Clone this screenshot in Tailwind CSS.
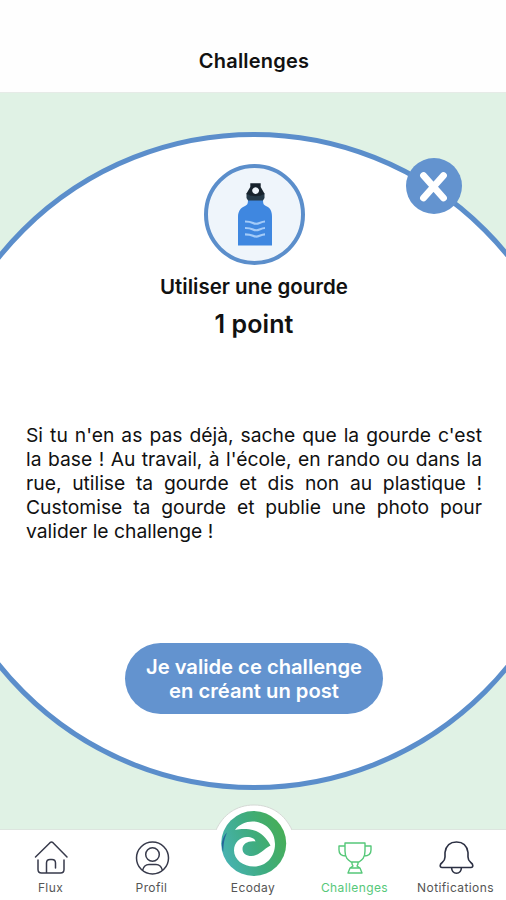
<!DOCTYPE html>
<html lang="fr">
<head>
<meta charset="utf-8">
<title>Challenges</title>
<script src="https://cdn.jsdelivr.net/npm/@tailwindcss/browser@4"></script>
</head>
<body class="w-[506px] h-[900px] overflow-hidden bg-white font-['Inter','Liberation_Sans',sans-serif] text-[#111]">
<div class="flex h-full flex-col">
  <header class="flex h-[93px] shrink-0 items-end justify-center border-b border-[#e6ebe7] bg-[#fefefe] pb-[19px] pl-[2px]">
    <h1 class="text-[20px] leading-6 font-semibold tracking-[.2px]">Challenges</h1>
  </header>

  <main class="flex h-[736px] shrink-0 justify-center overflow-hidden bg-[#e0f2e5] pt-[39px]">
    <section class="relative left-[1px] flex h-[658px] w-[658px] shrink-0 flex-col items-center rounded-full border-[5px] border-[#5b8ecb] bg-white pt-[27px]">
      <button class="absolute top-[21px] left-[476px] flex size-[56px] items-center justify-center rounded-full bg-[#6393cf]" aria-label="Fermer">
        <svg class="size-[56px]" viewBox="0 0 56 56" fill="none" stroke="#fff" stroke-width="6.800" stroke-linecap="round"><path d="M17.500 17.500 37.500 40M37.500 17.500 17.500 40"/></svg>
      </button>
      <div class="size-[101px] shrink-0 rounded-full border-4 border-[#5b8ecb] bg-[#eff5fb]">
        <svg class="size-[93px]" viewBox="0 0 93 93">
          <path d="M30 77.500V49c0-6 3-9.500 7-11 2.500-1.200 3-2 3-7h15c0 5 .5 5.800 3 7 4 1.500 6 5 6 11v28.500Z" fill="#3f87e0"/>
          <path d="M38.500 25.500q8 4 18 0v4.500l-1.500 2.500H40L38.500 30Z" fill="#263a49"/>
          <path fill-rule="evenodd" d="M42.300 15.300h10.400v3.700l4 7q-9 4.500-18.500 0l4.100-7ZM47.600 19.200a3.400 3.400 0 1 0 .01 0Z" fill="#17222c"/>
          <path d="M37 53.500q5 0 8 1.500t6.500 0 5.500-1.500M37 60q5 0 8 1.500t6.500 0 5.500-1.500M37 66.300q5 0 8 1.500t6.500 0 5.500-1.500" fill="none" stroke="#a4cbf8" stroke-width="2.200"/>
        </svg>
      </div>
      <h2 class="mt-[10px] text-[20.500px] leading-6 font-semibold">Utiliser une gourde</h2>
      <p class="mt-[10px] text-[25px] leading-[30px] font-semibold tracking-[.1px]">1 point</p>
      <p class="mt-[84px] w-[456px] text-justify text-[19.300px] leading-[24px]">Si tu n'en as pas déjà, sache que la gourde c'est la base ! Au travail, à l'école, en rando ou dans la rue, utilise ta gourde et dis non au plastique&nbsp;! Customise ta gourde et publie une photo pour valider le challenge !</p>
      <button class="mt-[100px] h-[71px] w-[258px] shrink-0 rounded-full bg-[#6393cf] text-center text-[20.200px] leading-[24px] font-semibold text-white">Je valide ce challenge<br>en créant un post</button>
    </section>
  </main>

  <nav class="relative flex h-[71px] shrink-0 border-t border-[#dde5df] bg-white text-[12px] leading-4 tracking-[.4px] text-[#555]">
    <a class="flex w-[101px] flex-col items-center pt-[10px]">
      <svg class="h-[36px] w-[36px]" viewBox="0 0 36 36" fill="none" stroke="#373a4b" stroke-width="1.500" stroke-linecap="round" stroke-linejoin="round"><path d="M2.500 17 17 2.700q1.500-1.200 3 0L34 17M5 20v9.500q0 3.500 3.500 3.500h19q3.500 0 3.500-3.500V20M13.500 33V23q0-3.500 3.500-3.500h2q3.500 0 3.500 3.500v5"/></svg>
      <span class="mt-[4px]">Flux</span>
    </a>
    <a class="flex w-[101px] flex-col items-center pt-[10px]">
      <svg class="h-[36px] w-[36px]" viewBox="0 0 36 36" fill="none" stroke="#373a4b" stroke-width="1.500" stroke-linejoin="round"><circle cx="18.500" cy="18" r="16"/><circle cx="18.500" cy="14.500" r="6.800"/><path d="M8.500 30.500q1.500-6 6.500-6h7q5 0 6.500 6"/></svg>
      <span class="mt-[4px]">Profil</span>
    </a>
    <a class="flex w-[102px] flex-col items-center pt-[50px]">
      <svg class="absolute -top-[26px] left-[216px] h-[76px] w-[76px]" viewBox="0 0 76 76">
        <defs><linearGradient id="leaf" x1="0" y1="0.700" x2="1" y2="0.300"><stop offset="0" stop-color="#48b3b4"/><stop offset=".5" stop-color="#3fac80"/><stop offset="1" stop-color="#47ae55"/></linearGradient></defs>
        <path d="M0 26C7 11 20 1 38 1S69 11 76 26V76H0Z" fill="#fff"/>
        <path d="M0 26C7 11 20 1 38 1S69 11 76 26" fill="none" stroke="#d5d9d5"/>
        <circle cx="37.700" cy="39.500" r="32.500" fill="url(#leaf)"/>
        <path d="M7.200 48C4.500 40 6 34 11 28.500 8 35 7.500 40 7.200 48Z" fill="#24659a"/>
        <path d="M19 26C23 20 31 17 38 17.500c12 1 21 10 21 22.500 0 13-9 22.500-21 22.500-11 0-20-7-20-16 0-8 6-13.500 13-13.500 4.500 0 8 1.500 8.500 4.500-7-1-13 2-13 7.500 0 4.500 4 7 9 7 7 0 11-6 19-10.500C49 32 43 26.500 33 25.300c-5-.6-9-.5-14 .7Z" fill="#fff"/>
      </svg>
      <span>Ecoday</span>
    </a>
    <a class="flex w-[101px] flex-col items-center pt-[10px] text-[#56c879]">
      <svg class="h-[36px] w-[36px]" viewBox="0 0 36 36" fill="none" stroke="currentColor" stroke-width="1.400" stroke-linejoin="round"><path d="M8 3h20v8c0 7-3 9-6 11h-8c-3-2-6-4-6-11ZM8 6H2v4c0 4 3 6 7 6M28 6h6v4c0 4-3 6-7 6M14 22h8M15 22v2l1 2-3 2-2 5h14l-2-5-3-2 1-2v-2M13 28h10"/></svg>
      <span class="mt-[4px]">Challenges</span>
    </a>
    <a class="flex w-[101px] flex-col items-center pt-[10px]">
      <svg class="h-[36px] w-[36px]" viewBox="0 0 36 36" fill="none" stroke="#2c3043" stroke-width="1.600" stroke-linejoin="round"><path d="M4 27.500q-1.800 0-1.800-2 0-1.500 2-3 2.800-2.200 2.800-5.500V12.500Q8.500 2 18.500 2T30 12.500v4.500q0 3.300 2.800 5.500 2 1.500 2 3 0 2-1.800 2ZM13.500 27.500q.5 5.800 5 5.800t5-5.800"/></svg>
      <span class="mt-[4px]">Notifications</span>
    </a>
  </nav>
</div>
</body>
</html>
